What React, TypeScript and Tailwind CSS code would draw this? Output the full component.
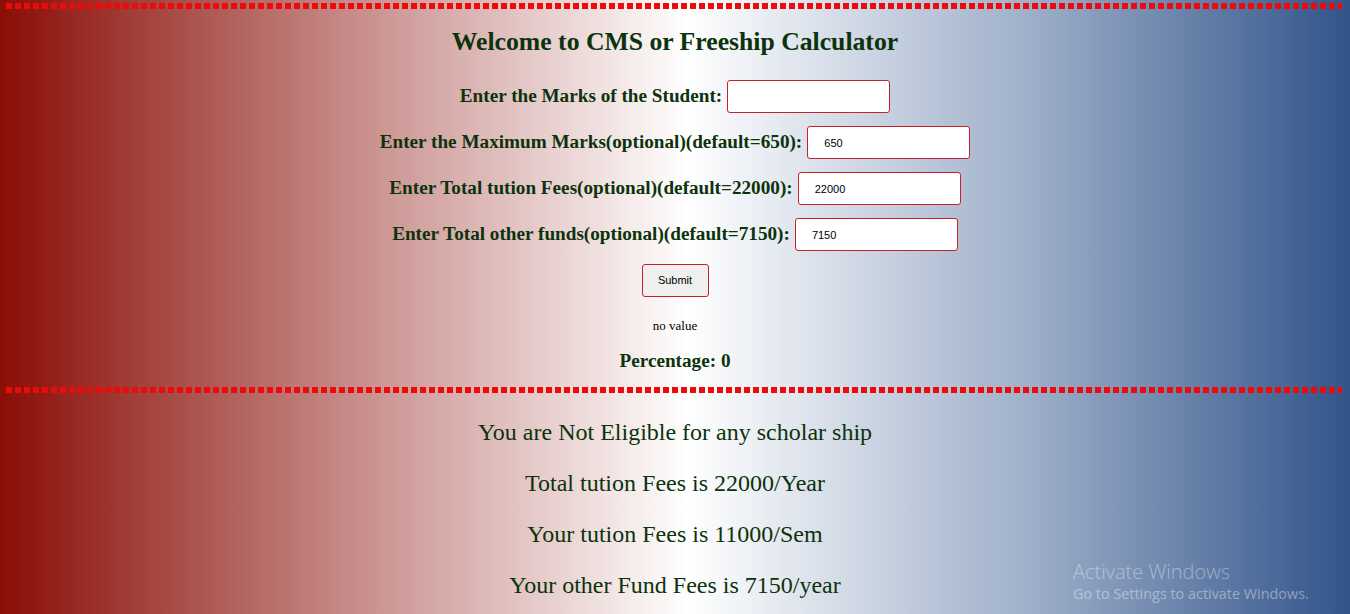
import React from "react";

const Dots = () => (
  <div className="mx-[6px] mr-[8px] h-[6px] bg-[repeating-linear-gradient(90deg,#ee0a0a_0px,#ee0a0a_6px,transparent_6px,transparent_9px)]" />
);

const Row = ({ label, value }: { label: string; value: string }) => (
  <div className="flex items-center justify-center h-[33px]">
    <span className="font-bold text-[19.2px] leading-[22px] text-[#0c330c] -mt-[2px]">{label}</span>
    <input
      readOnly
      defaultValue={value}
      className="ml-[5px] w-[163px] h-[33px] bg-white border border-[#c8202a] rounded-[3px] pl-[16px] text-[11px] text-black outline-none font-['Liberation_Sans',Arial,sans-serif]"
    />
  </div>
);

export default function App() {
  return (
    <div className="relative w-full h-[614px] overflow-hidden bg-[linear-gradient(to_right,#8a0e06_0%,#c48784_25%,#ffffff_51%,#9fb0ca_76%,#32548a_100%)] font-['Liberation_Serif','Times_New_Roman',serif] text-[#0c330c]">
      <div className="pt-[3px]">
        <Dots />
      </div>
      <h2 className="mt-[19px] text-center font-bold text-[25.7px] leading-[28px]">
        Welcome to CMS or Freeship Calculator
      </h2>
      <div className="mt-[24px] flex flex-col gap-[13px]">
        <Row label="Enter the Marks of the Student:" value="" />
        <Row label="Enter the Maximum Marks(optional)(default=650):" value="650" />
        <Row label="Enter Total tution Fees(optional)(default=22000):" value="22000" />
        <Row label="Enter Total other funds(optional)(default=7150):" value="7150" />
        <div className="flex justify-center">
          <button className="w-[67px] h-[33px] bg-[#efefef] border border-[#c8202a] rounded-[3px] text-[11px] text-black font-['Liberation_Sans',Arial,sans-serif]">
            Submit
          </button>
        </div>
      </div>
      <p className="mt-[21px] text-center text-[13px] leading-[16px] text-black">no value</p>
      <p className="mt-[16px] text-center font-bold text-[19.2px] leading-[22px]">Percentage: 0</p>
      <div className="mt-[15px]">
        <Dots />
      </div>
      <div className="mt-[24px] flex flex-col gap-[21px] text-center text-[24px] leading-[30px]">
        <p>You are Not Eligible for any scholar ship</p>
        <p>Total tution Fees is 22000/Year</p>
        <p>Your tution Fees is 11000/Sem</p>
        <p>Your other Fund Fees is 7150/year</p>
      </div>
      <div className="absolute left-[1073px] top-[560px] text-white/40 font-['Open_Sans','Noto_Sans',sans-serif] pointer-events-none">
        <div className="text-[20px] leading-[24px] font-light">Activate Windows</div>
        <div className="text-[14.4px] leading-[20px]">Go to Settings to activate Windows.</div>
      </div>
    </div>
  );
}
